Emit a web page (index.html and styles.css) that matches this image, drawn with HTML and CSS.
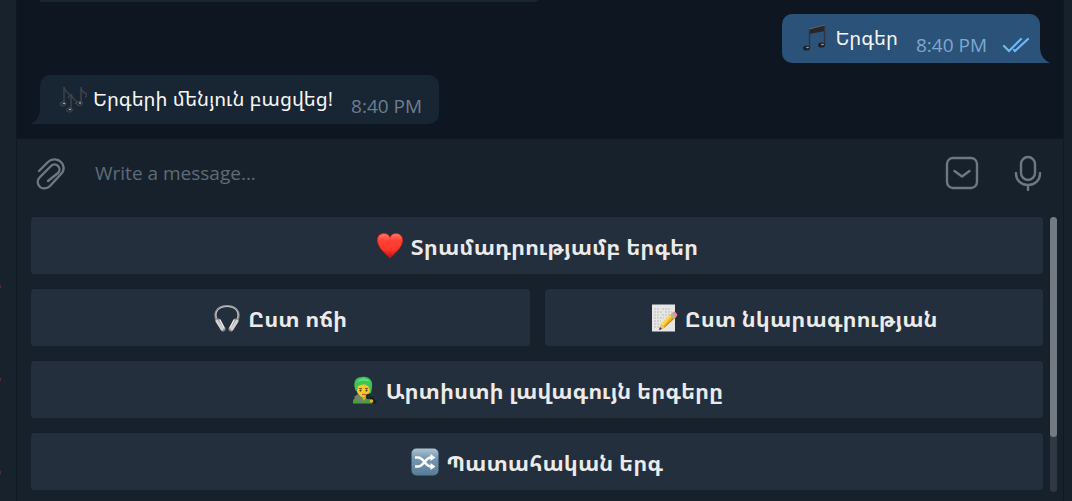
FILE: index.html
```html
<!DOCTYPE html>
<html lang="hy">
<head>
<meta charset="utf-8">
<meta name="viewport" content="width=device-width, initial-scale=1">
<title>Chat</title>
<link rel="stylesheet" href="styles.css">
</head>
<body>
<div class="app">
  <aside class="sidebar"><i class="mark"></i><i class="mark"></i><i class="mark"></i></aside>
  <main class="chat">
    <section class="history">
      <div class="previous"></div>
      <div class="bubble outgoing">
        <svg class="emoji" viewBox="0 0 28 28" aria-hidden="true">
          <path d="M8 5 24 1v6L8 10z" fill="#25252a"/>
          <path d="M8.500 5v19M23.500 2v19" stroke="#34343a" stroke-width="1.500" fill="none"/>
          <path d="M8 5 24 1" stroke="#626267" stroke-width="1"/>
          <ellipse cx="5.500" cy="24" rx="3.500" ry="2.600" fill="#222226"/><ellipse cx="20.500" cy="21" rx="3.500" ry="2.600" fill="#222226"/>
          <ellipse cx="6.500" cy="23.500" rx="1.500" ry=".8" fill="#999da1"/><ellipse cx="21.500" cy="20.500" rx="1.500" ry=".8" fill="#999da1"/>
        </svg>
        <span class="text">Երգեր</span>
        <time class="time">8:40 PM</time>
        <svg class="checks" viewBox="0 0 28 16" aria-label="Read"><path d="m2 9 5 5L19 2M12 13l1 1L26 2" fill="none" stroke="#6cb9f5" stroke-width="2.200" stroke-linecap="round"/></svg>
        <svg class="tail" viewBox="0 0 10 16" aria-hidden="true"><path d="M0 0c0 8 4 13 10 16H0z" fill="#2b5278"/></svg>
      </div>
      <div class="bubble incoming">
        <svg class="tail" viewBox="0 0 10 16" aria-hidden="true"><path d="M10 0c0 8-3 13-10 16h10z" fill="#182533"/></svg>
        <svg class="emoji" viewBox="0 0 28 28" aria-hidden="true">
          <g fill="none" stroke="#3c4348" stroke-width="1.500">
            <path d="M5 19V2q1 4 4 6t0 5M12 25V9q1 4 4 6t0 4M22 18V2q0 4 4 6t0 4"/>
          </g>
          <g fill="#272b2f" stroke="#50575c" stroke-width=".6"><ellipse cx="4" cy="19" rx="3" ry="2.200"/><ellipse cx="10.500" cy="25" rx="3" ry="2.200"/><ellipse cx="20.500" cy="18.500" rx="3" ry="2.200"/></g>
          <g fill="#a2a6a8"><ellipse cx="5" cy="18.500" rx="1.300" ry=".7"/><ellipse cx="11" cy="24.500" rx="1.300" ry=".7"/><ellipse cx="21" cy="18" rx="1.300" ry=".7"/></g>
        </svg>
        <span class="text">Երգերի մենյուն բացվեց!</span>
        <time class="time">8:40 PM</time>
      </div>
    </section>
    <form class="composer">
      <button class="tool" type="button" aria-label="Attach"><svg width="32" height="36" viewBox="0 0 32 36"><path d="m3 16 9-9c4-4 10-3 13 0s4 8 0 12L14 31c-3 3-8 3-10 1-3-3-3-7 0-10L15 11c2-2 5-2 7 0s2 5 0 7L12 26"/></svg></button>
      <input class="message" type="text" placeholder="Write a message..." aria-label="Message">
      <button class="tool" type="button" aria-label="Hide keyboard"><svg width="36" height="36" viewBox="0 0 36 36"><rect x="3" y="3" width="30" height="30" rx="6"/><path d="m10.500 16 7.500 5.500 7.500-5.500"/></svg></button>
      <button class="tool" type="button" aria-label="Record voice"><svg width="32" height="36" viewBox="0 0 32 36"><rect x="9" y="2" width="14" height="23" rx="7"/><path d="M4 18v1a12 11 0 0 0 24 0v-1M16 30v5"/></svg></button>
    </form>
    <section class="keyboard">
      <div class="keys">
        <button class="key wide" type="button">
          <svg class="emoji" viewBox="0 0 28 28" aria-hidden="true"><defs><linearGradient id="heart" x2="0" y2="1"><stop stop-color="#ff7768"/><stop offset=".3" stop-color="#ff4034"/><stop offset=".65" stop-color="#ff382c"/><stop offset="1" stop-color="#b90e09"/></linearGradient></defs><path d="M14 26C10 22 2 16 1.500 9 1 4.500 4 1.500 8 1.500c3 0 5 1.500 6 4 1-2.500 3-4 6-4 4 0 7 3 6.500 7.500C26 16 18 22 14 26z" fill="url(#heart)" stroke="#d51c14" stroke-width=".7"/></svg>
          <span>Տրամադրությամբ երգեր</span>
        </button>
        <button class="key" type="button">
          <svg class="emoji" viewBox="0 0 28 28" aria-hidden="true"><path d="M3.500 16C0 7 6 2 14 2s14 5 10.500 14" fill="none" stroke="#8f9193" stroke-width="2.200"/><path d="M3.500 14C1 7 7 2.500 14 2.500S27 7 24.500 14" fill="none" stroke="#d0d0d0" stroke-width=".8"/><g stroke-linecap="round" fill="none"><path d="m5 17 5 8M23 17l-5 8" stroke="#8c8b8c" stroke-width="5"/><path d="m4 17 5 8M24 17l-5 8" stroke="#d3d0d0" stroke-width="3"/><path d="m7 16 4 8M21 16l-4 8" stroke="#eeeeec" stroke-width="1.500"/></g></svg>
          <span>Ըստ ոճի</span>
        </button>
        <button class="key" type="button">
          <svg class="emoji" viewBox="0 0 28 28" aria-hidden="true"><path d="M2 .5h23v27H2z" fill="#e6e6e4"/><path d="M4 5h6m2 0h9M4 8h9m2 0h7M4 11h6m2 0h9M4 14h10m2 0h5M4 17h7m3 0h5M4 20h6M4 23h5" stroke="#bbb" stroke-width="1" stroke-dasharray="2 1"/><path d="m9 26 2-6L22 9l4 4-12 11z" fill="#f2b71b"/><path d="m11 20 11-11 1 1-10 12z" fill="#ffdb51"/><path d="m14 24 12-11-1-1-11 11z" fill="#c68010"/><path d="m9 26 2-6 4 4z" fill="#e9c18e"/><path d="m9 26 1-3 2 2z" fill="#353332"/><path d="m20 11 2-2 4 4-2 2z" fill="#afb3b4"/><path d="m22 9 1-1c2-1 5 2 4 4l-1 1z" fill="#f3858c"/></svg>
          <span>Ըստ նկարագրության</span>
        </button>
        <button class="key wide" type="button">
          <svg class="emoji" viewBox="0 0 28 28" aria-hidden="true"><path d="M2 27.500V25c1-4 6-6 11-6s8 3 8 8.500z" fill="#45a437"/><path d="m9 18 4 7 4-7" fill="#dfaa23"/><ellipse cx="12.500" cy="13" rx="7" ry="8" fill="#f9c62e"/><path d="M4 13C2 5 5 1 11 1c7-1 11 4 10 9 0 4-1 7-2 8 0-5-1-8-4-9-2-1-5 0-8 1 0 3-1 5-2 5z" fill="#3fc45a"/><path d="M6 6c3-4 9-5 13 0-5-2-9-2-13 0z" fill="#69df7a"/><path d="M8 12.500h3m3 0h3" stroke="#805a20"/><circle cx="9.500" cy="14.500" r="1" fill="#41351f"/><circle cx="15.500" cy="14.500" r="1" fill="#41351f"/><path d="M11 18.500h4" stroke="#b75131" stroke-width="1.200"/><path d="m7 18 6 8-4 1-6-6zM17 19l-3 8 5-5z" fill="#718176"/><path d="m18 20 7 7" stroke="#171c1d" stroke-width="3"/><circle cx="17.500" cy="20.500" r="2.700" fill="#24292a"/><circle cx="20.500" cy="25" r="1.800" fill="#e9b124"/></svg>
          <span>Արտիստի լավագույն երգերը</span>
        </button>
        <button class="key wide" type="button">
          <svg class="emoji" viewBox="0 0 28 28" aria-hidden="true"><defs><linearGradient id="tile" x2="0" y2="1"><stop stop-color="#acc4d6"/><stop offset=".35" stop-color="#7798b3"/><stop offset="1" stop-color="#577b99"/></linearGradient></defs><rect x=".5" y=".5" width="27" height="27" rx="5" fill="url(#tile)"/><path d="M4 9.500h3c6 0 7 9 13 9h1M4 18.500h3c6 0 7-9 13-9h1" fill="none" stroke="#fff" stroke-width="2.600"/><path d="m19.500 6 5 3.500-5 3.500zM19.500 15l5 3.500-5 3.500z" fill="#fff"/></svg>
          <span>Պատահական երգ</span>
        </button>
      </div>
      <div class="scrollbar"><div class="thumb"></div></div>
    </section>
  </main>
  <aside class="edge"></aside>
</div>
</body>
</html>
```
FILE: styles.css
```css
* { box-sizing: border-box; }
body {
  margin: 0;
  background: #17212b;
  color: #f5f5f5;
  font-family: "Open Sans", "Noto Sans Armenian", "Noto Sans", "DejaVu Sans", sans-serif;
}
button, input { font: inherit; color: inherit; border: 0; padding: 0; }
svg { display: block; flex: none; }
.app { display: grid; grid-template-columns: 16px minmax(0, 1fr) 8px; min-height: 100vh; }
.sidebar {
  display: flex;
  flex-direction: column;
  gap: 90px;
  padding-top: 285px;
  background: #18222c;
}
.mark { width: 1px; height: 3px; background: #5c292e; }
.chat { border-left: 1px solid #101922; border-right: 1px solid #101922; background: #17212b; }
.edge { background: #17212b; }
.history {
  display: flex;
  flex-direction: column;
  align-items: flex-start;
  padding: 0 23px 14px;
  background: #0e1621;
  border-bottom: 1px solid #101922;
}
.previous { width: 498px; height: 2px; margin-bottom: 12px; background: #182533; border-radius: 0 0 8px 0; }
.bubble {
  position: relative;
  display: flex;
  align-items: flex-start;
  height: 49px;
  padding: 10px 17px 0 19px;
  border-radius: 10px;
  font-size: 20px;
  line-height: 28px;
  white-space: nowrap;
}
.outgoing { align-self: flex-end; margin-bottom: 12px; padding-right: 10px; background: #2b5278; border-bottom-right-radius: 0; }
.incoming { background: #182533; border-bottom-left-radius: 0; }
.emoji { width: 28px; height: 28px; }
.bubble .text { margin-left: 6px; }
.time { margin: 7px 0 0 18px; color: #6d7f8f; font-size: 19px; }
.outgoing .time { color: #7da8d3; }
.checks { width: 28px; height: 16px; margin: 13px 0 0 15px; }
.tail { position: absolute; bottom: 0; width: 10px; height: 16px; }
.outgoing .tail { left: 100%; }
.incoming .tail { right: 100%; }
.composer { display: flex; align-items: center; height: 78px; padding: 0 19px 10px; }
.tool { background: none; cursor: pointer; }
.tool svg { fill: none; stroke: #6c7883; stroke-width: 2.4; stroke-linecap: round; stroke-linejoin: round; }
.tool + .tool { margin-left: 32px; }
.message { flex: 1; min-width: 0; margin: 0 27px; background: none; font-size: 19px; outline: 0; }
.message::placeholder { color: #5f6b76; opacity: 1; }
.keyboard { display: flex; gap: 7px; padding: 0 6px 9px 14px; }
.keys { flex: 1; display: grid; grid-template-columns: 1fr 1fr; gap: 15px; padding-bottom: 2px; }
.key {
  display: flex;
  align-items: center;
  justify-content: center;
  gap: 7px;
  height: 57px;
  border-radius: 4px;
  background: #242f3d;
  color: #ebebeb;
  font-size: 22px;
  font-weight: 700;
  cursor: pointer;
}
.wide { grid-column: 1 / -1; }
.scrollbar { width: 7px; border-radius: 4px; background: #303943; }
.thumb { height: 80%; border-radius: 4px; background: #747a82; }
```
